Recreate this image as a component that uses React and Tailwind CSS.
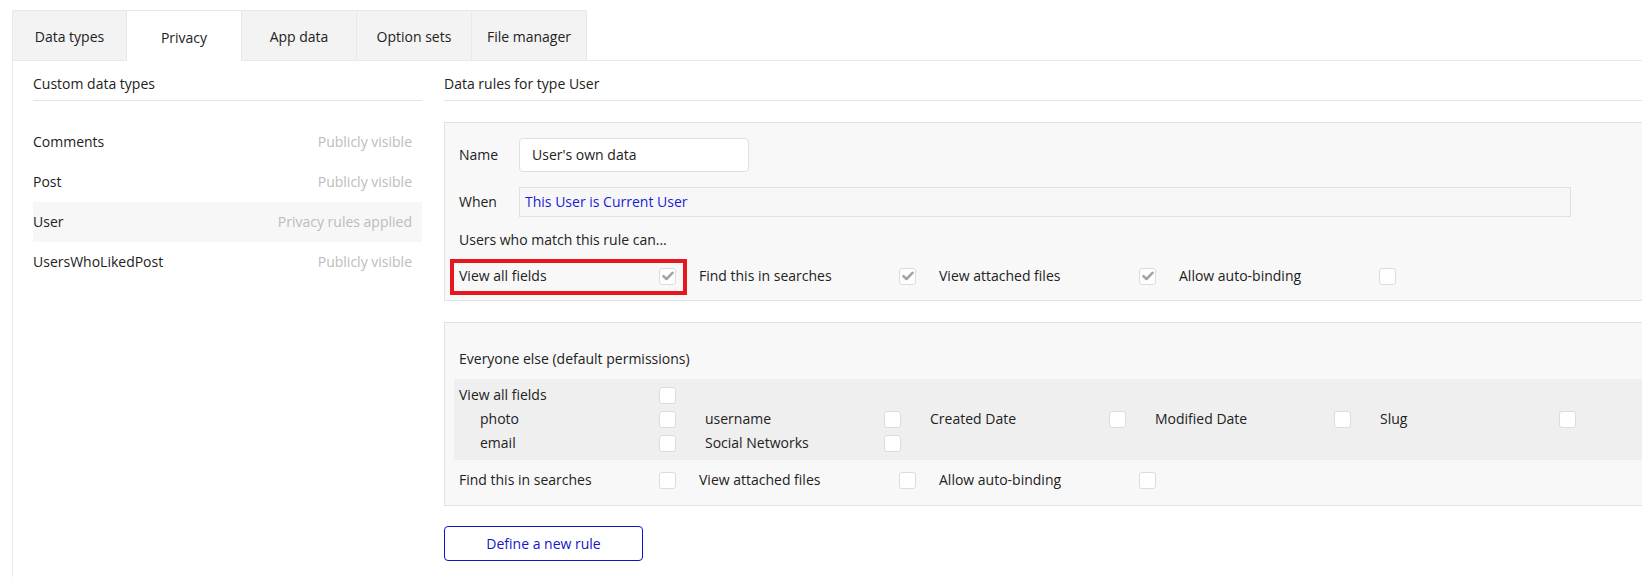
import React from "react";

const FONT = { fontFamily: '"Open Sans", "Noto Sans", sans-serif' };

function Check({ checked }) {
  return (
    <div className="w-[17px] h-[17px] shrink-0 rounded-[3px] border border-[#dcdcdc] bg-white flex items-center justify-center">
      {checked && (
        <svg width="12" height="10" viewBox="0 0 12 10">
          <path d="M1.5 5.2 L4.5 8 L10.5 1.8" fill="none" stroke="#a4a4a4" strokeWidth="2.6" strokeLinecap="round" strokeLinejoin="round" />
        </svg>
      )}
    </div>
  );
}

function Cell({ label, checked, children }) {
  return (
    <div className="w-[240px] shrink-0 flex items-center relative">
      <div className="w-[200px] shrink-0">{label}</div>
      <Check checked={checked} />
      {children}
    </div>
  );
}

function FieldCell({ label, indent }) {
  return (
    <div className="w-[225px] shrink-0 flex items-center">
      <div className={"w-[200px] shrink-0 " + (indent ? "pl-[21px]" : "")}>{label}</div>
      <Check />
    </div>
  );
}

const tabs = ["Data types", "Privacy", "App data", "Option sets", "File manager"];
const types = [
  ["Comments", "Publicly visible"],
  ["Post", "Publicly visible"],
  ["User", "Privacy rules applied", true],
  ["UsersWhoLikedPost", "Publicly visible"],
];

export default function App() {
  return (
    <div style={FONT} className="w-full h-[577px] bg-white text-[14px] leading-[18px] text-[#222222] overflow-hidden">
      {/* Tabs */}
      <div className="flex pl-[12px] pt-[10px]">
        {tabs.map((t, i) => (
          <div
            key={t}
            className={
              "w-[115px] h-[51px] shrink-0 flex items-center justify-center pt-[3px] border-t border-r border-[#e8e8e8] " +
              (i === 0 ? "border-l " : "") +
              (i === 1 ? "bg-white" : "bg-[#f3f3f3] border-b")
            }
          >
            {t}
          </div>
        ))}
        <div className="flex-1 border-b border-[#e8e8e8]" />
      </div>

      {/* Body */}
      <div className="ml-[12px] border-l border-[#ececec] h-[520px] flex pl-[20px]">
        {/* Left column */}
        <div className="w-[389px] shrink-0">
          <div className="pt-[14px] pb-[7px] border-b border-[#e3e3e3]">Custom data types</div>
          <div className="mt-[21px]">
            {types.map(([n, s, active]) => (
              <div key={n} className={"h-[40px] flex items-center justify-between pr-[10px] " + (active ? "bg-[#f7f7f7]" : "")}>
                <span>{n}</span>
                <span className="text-[#bcbcbc]">{s}</span>
              </div>
            ))}
          </div>
        </div>

        {/* Right column */}
        <div className="ml-[22px] w-[1230px] shrink-0">
          <div className="pt-[14px] pb-[7px] border-b border-[#e3e3e3]">Data rules for type User</div>

          {/* Panel 1 */}
          <div className="mt-[21px] h-[179px] bg-[#f8f8f8] border border-[#e2e2e2] pl-[14px] pt-[15px]">
            <div className="flex items-center">
              <div className="w-[60px] shrink-0">Name</div>
              <div className="w-[230px] h-[34px] bg-white border border-[#e0e0e0] rounded-[4px] flex items-center pl-[12px]">User's own data</div>
            </div>
            <div className="flex items-center mt-[15px]">
              <div className="w-[60px] shrink-0">When</div>
              <div className="w-[1052px] h-[30px] bg-[#f7f7f7] border border-[#e0e0e0] flex items-center pl-[5px] text-[#1b1bd6]">This User is Current User</div>
            </div>
            <div className="mt-[14px]">Users who match this rule can...</div>
            <div className="flex items-center h-[36px] mt-[9px]">
              <Cell label="View all fields" checked>
                <div className="absolute left-[-9px] top-[-8px] w-[237px] h-[36px] border-[4px] border-[#e8161f]" />
              </Cell>
              <Cell label="Find this in searches" checked />
              <Cell label="View attached files" checked />
              <Cell label="Allow auto-binding" />
            </div>
          </div>

          {/* Panel 2 */}
          <div className="mt-[21px] h-[184px] bg-[#f8f8f8] border border-[#e2e2e2] pt-[27px]">
            <div className="pl-[14px]">Everyone else (default permissions)</div>
            <div className="ml-[9px] mt-[11px] bg-[#efefef] pl-[5px] pt-[4px] pb-[5px]">
              <div className="h-[24px] flex items-center">
                <FieldCell label="View all fields" />
              </div>
              <div className="h-[24px] flex items-center">
                <FieldCell label="photo" indent />
                <FieldCell label="username" indent />
                <FieldCell label="Created Date" indent />
                <FieldCell label="Modified Date" indent />
                <FieldCell label="Slug" indent />
              </div>
              <div className="h-[24px] flex items-center">
                <FieldCell label="email" indent />
                <FieldCell label="Social Networks" indent />
              </div>
            </div>
            <div className="pl-[14px] h-[40px] flex items-center">
              <Cell label="Find this in searches" />
              <Cell label="View attached files" />
              <Cell label="Allow auto-binding" />
            </div>
          </div>

          <button className="mt-[20px] w-[199px] h-[35px] border border-[#1212c8] rounded-[4px] bg-white text-[#1414cc] text-[14px] flex items-center justify-center">
            Define a new rule
          </button>
        </div>
      </div>
    </div>
  );
}
